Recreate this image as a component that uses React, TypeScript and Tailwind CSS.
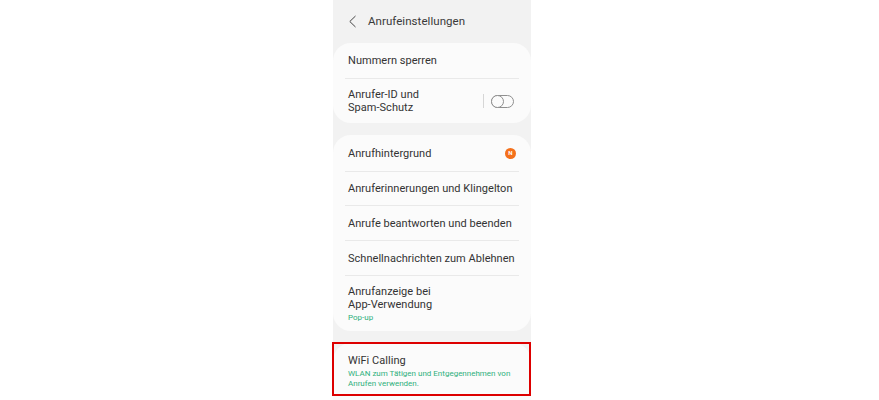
function Row({ children, className = "" }: { children: React.ReactNode; className?: string }) {
  return <div className={`flex items-center justify-between whitespace-nowrap px-[15px] text-[11px] leading-[13px] tracking-[0.03px] text-[#333] ${className}`}>{children}</div>;
}

function Divider() {
  return <div className="mx-[12px] h-px bg-[#e9e9e9]" />;
}

export default function App() {
  return (
    <div className="relative h-[400px] w-[879px] overflow-hidden bg-white font-['Roboto',sans-serif]">
      <div className="ml-[333px] flex h-[400px] w-[198px] flex-col bg-[#f2f2f2]">
        <div className="flex h-[43px] shrink-0 items-center pl-[15px]">
          <svg width="9" height="13" viewBox="0 0 9 13" fill="none" stroke="#444" strokeWidth="1">
            <path d="M7.5 1 L1.8 6.5 L7.5 12" />
          </svg>
          <span className="ml-[11px] text-[11.5px] tracking-[0.05px] text-[#3a3a3a]">Anrufeinstellungen</span>
        </div>
        <div className="rounded-[18px] bg-[#fbfbfb]">
          <Row className="h-[35px]">Nummern sperren</Row>
          <Divider />
          <Row className="h-[44px]">
            <span>Anrufer-ID und<br />Spam-Schutz</span>
            <span className="mr-[2px] flex items-center">
              <span className="mr-[7px] h-[14px] w-px bg-[#d6d6d6]" />
              <span className="relative block h-[13px] w-[23px] rounded-full border border-[#8f8f8f]">
                <span className="absolute left-[-1px] top-[-1px] h-[13px] w-[13px] rounded-full border border-[#8f8f8f] bg-[#fbfbfb]" />
              </span>
            </span>
          </Row>
        </div>
        <div className="mt-[12px] rounded-[18px] bg-[#fbfbfb]">
          <Row className="h-[36px]">
            <span>Anrufhintergrund</span>
            <span className="flex h-[11px] w-[11px] items-center justify-center rounded-full bg-[#f4701b] text-[6px] font-bold leading-none text-white">N</span>
          </Row>
          <Divider />
          <Row className="h-[33px]">Anruferinnerungen und Klingelton</Row>
          <Divider />
          <Row className="h-[34px]">Anrufe beantworten und beenden</Row>
          <Divider />
          <Row className="h-[34px]">Schnellnachrichten zum Ablehnen</Row>
          <Divider />
          <div className="h-[55px] px-[15px] pt-[9px] text-[11px] leading-[13px] tracking-[0.03px] text-[#333]">
            Anrufanzeige bei<br />App-Verwendung
            <div className="mt-[1px] text-[8px] leading-[11px] tracking-normal text-[#2fb07c]">Pop-up</div>
          </div>
        </div>
        <div className="mt-[12px] flex-1 rounded-t-[18px] bg-[#fbfbfb] px-[15px] pt-[10px]">
          <div className="text-[11px] leading-[16px] tracking-[0.03px] text-[#333]">WiFi Calling</div>
          <div className="text-[8px] leading-[10px] text-[#2fb07c]">WLAN zum Tätigen und Entgegennehmen von<br />Anrufen verwenden.</div>
        </div>
      </div>
      <div className="absolute left-[332px] top-[342px] h-[54px] w-[199px] border-2 border-[#dd0000]" />
    </div>
  );
}
